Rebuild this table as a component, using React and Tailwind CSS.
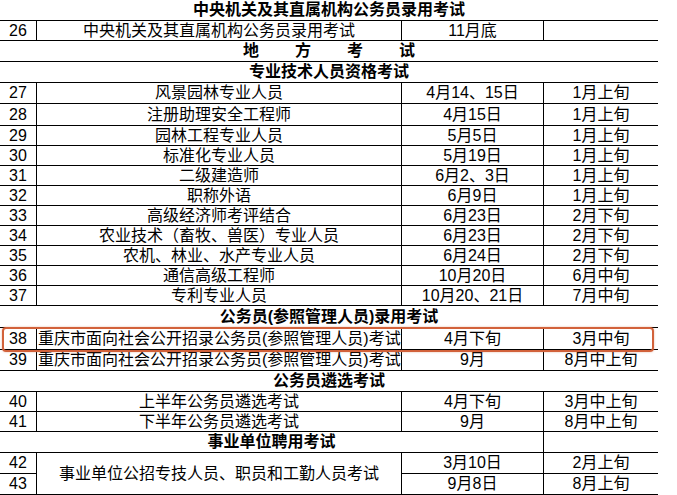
import React from 'react'

const font = { fontFamily: '"Liberation Sans", "Noto Sans CJK SC", sans-serif' }

const cell = 'flex items-center justify-center border-b border-black whitespace-nowrap'
const cellR = cell + ' border-r'

function Row({ no, name, date, reg, left }) {
  return (
    <>
      <div className={cellR}>{no}</div>
      <div className={left ? 'flex items-center justify-start pl-[1px] border-b border-r border-black whitespace-nowrap' : cellR}>{name}</div>
      <div className={cellR}>{date}</div>
      <div className={cell}>{reg}</div>
    </>
  )
}

function Head({ children }) {
  return <div className={cell + ' col-span-4 font-bold'}>{children}</div>
}

const zyjs = [
  ['27', '风景园林专业人员', '4月14、15日', '1月上旬'],
  ['28', '注册助理安全工程师', '4月15日', '1月上旬'],
  ['29', '园林工程专业人员', '5月5日', '1月上旬'],
  ['30', '标准化专业人员', '5月19日', '1月上旬'],
  ['31', '二级建造师', '6月2、3日', '1月上旬'],
  ['32', '职称外语', '6月9日', '1月上旬'],
  ['33', '高级经济师考评结合', '6月23日', '2月下旬'],
  ['34', '农业技术（畜牧、兽医）专业人员', '6月23日', '2月下旬'],
  ['35', '农机、林业、水产专业人员', '6月24日', '2月下旬'],
  ['36', '通信高级工程师', '10月20日', '6月中旬'],
  ['37', '专利专业人员', '10月20、21日', '7月中旬'],
]

export default function App() {
  return (
    <div className="w-[677px] h-[495px] bg-white overflow-hidden text-black text-[16px] leading-none" style={font}>
      <div className="relative grid w-[658px] grid-cols-[37px_365px_142px_114px] grid-rows-[21px_20px_21px_21px_21px_22px_20px_20px_20px_20px_20px_20px_20px_20px_20px_22px_22px_21px_21px_20px_20px_21px_21px_21px]">
        <Head>中央机关及其直属机构公务员录用考试</Head>
        <Row no="26" name="中央机关及其直属机构公务员录用考试" date="11月底" reg="" />
        <div className={cell + ' col-span-4 font-bold gap-[36px]'}>
          <span>地</span><span>方</span><span>考</span><span>试</span>
        </div>
        <Head>专业技术人员资格考试</Head>
        {zyjs.map((r) => (
          <Row key={r[0]} no={r[0]} name={r[1]} date={r[2]} reg={r[3]} />
        ))}
        <Head>公务员(参照管理人员)录用考试</Head>
        <Row no="38" name="重庆市面向社会公开招录公务员(参照管理人员)考试" date="4月下旬" reg="3月中旬" left />
        <Row no="39" name="重庆市面向社会公开招录公务员(参照管理人员)考试" date="9月" reg="8月中上旬" left />
        <Head>公务员遴选考试</Head>
        <Row no="40" name="上半年公务员遴选考试" date="4月下旬" reg="3月中上旬" />
        <Row no="41" name="下半年公务员遴选考试" date="9月" reg="8月中上旬" />
        <div className={cellR + ' col-span-3 font-bold'}>事业单位聘用考试</div>
        <div className={cell}></div>
        <div className={cellR}>42</div>
        <div className={cellR + ' row-span-2'}>事业单位公招专技人员、职员和工勤人员考试</div>
        <div className={cellR}>3月10日</div>
        <div className={cell}>2月上旬</div>
        <div className={cellR}>43</div>
        <div className={cellR}>9月8日</div>
        <div className={cell}>8月上旬</div>

        <div className="absolute left-[2px] top-[327px] w-[652px] h-[25px] rounded-[4px] border-[2.5px] border-[#d2623b] shadow-[0_0_2px_rgba(210,98,59,0.5)] pointer-events-none"></div>
      </div>
    </div>
  )
}
